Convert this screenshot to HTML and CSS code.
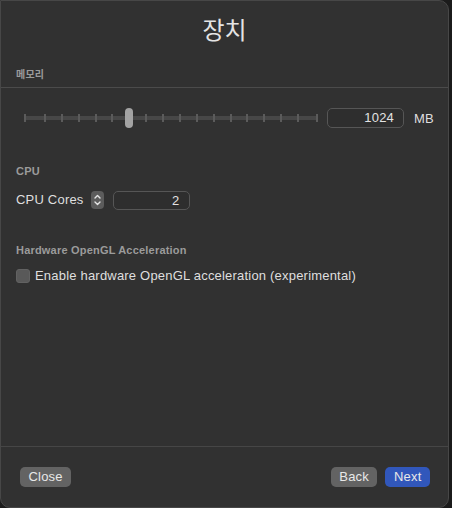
FILE: index.html
```html
<!DOCTYPE html>
<html lang="ko">
<head>
  <meta charset="UTF-8" />
  <meta name="viewport" content="width=device-width, initial-scale=1" />
  <title>장치</title>
  <link rel="stylesheet" href="styles.css">
</head>
<body>
  <div class="window">
    <h1 class="title">장치</h1>

    <div class="group-label with-rule">메모리</div>
    <div class="memory-row">
      <div class="slider">
        <div class="ticks">
          <span class="tick first"></span>
          <span class="tick"></span><span class="tick"></span><span class="tick"></span>
          <span class="tick"></span><span class="tick"></span><span class="tick"></span>
          <span class="tick"></span><span class="tick"></span><span class="tick"></span>
          <span class="tick"></span><span class="tick"></span><span class="tick"></span>
          <span class="tick"></span><span class="tick"></span><span class="tick"></span>
          <span class="tick"></span>
          <span class="tick last"></span>
        </div>
        <div class="thumb"></div>
      </div>
      <div class="field">1024</div>
      <span class="unit">MB</span>
    </div>

    <div class="group-label cpu-label">CPU</div>
    <div class="cpu-row">
      <span class="text">CPU Cores</span>
      <div class="stepper">
        <svg width="13" height="18" viewBox="0 0 13 18">
          <path d="M4 7 L6.5 4.5 L9 7" fill="none" stroke="#e6e6e6" stroke-width="1.4" stroke-linecap="round" stroke-linejoin="round"/>
          <path d="M4 11 L6.5 13.5 L9 11" fill="none" stroke="#e6e6e6" stroke-width="1.4" stroke-linecap="round" stroke-linejoin="round"/>
        </svg>
      </div>
      <div class="field">2</div>
    </div>

    <div class="group-label gl-label">Hardware OpenGL Acceleration</div>
    <label class="check-row">
      <span class="checkbox"></span>
      <span class="text">Enable hardware OpenGL acceleration (experimental)</span>
    </label>

    <div class="spacer"></div>

    <div class="footer">
      <button class="btn">Close</button>
      <div class="footer-right">
        <button class="btn">Back</button>
        <button class="btn primary">Next</button>
      </div>
    </div>
  </div>
</body>
</html>
```

FILE: styles.css
```css
body {
  margin: 0;
  background: #1b1b1b;
  font-family: "Liberation Sans", "Noto Sans CJK KR", sans-serif;
  color: #dfdfdf;
}

.window {
  width: 449px;
  height: 508px;
  box-sizing: border-box;
  background: #313131;
  border: 1px solid #474747;
  border-radius: 0 10px 10px 10px;
  display: flex;
  flex-direction: column;
  overflow: hidden;
}

.title {
  margin: 0;
  padding-top: 12px;
  font-family: "Noto Sans CJK KR", sans-serif;
  font-size: 24px;
  line-height: 32px;
  font-weight: 400;
  text-align: center;
  color: #e4e4e4;
}

.group-label {
  padding-left: 15px;
  font-size: 11px;
  line-height: 14px;
  font-weight: bold;
  letter-spacing: 0.2px;
  color: #9b9b9b;
}

.with-rule {
  margin-top: 22px;
  padding-bottom: 6px;
  border-bottom: 1px solid #4b4b4b;
  font-family: "Noto Sans CJK KR", sans-serif;
  font-size: 10px;
}

.memory-row {
  display: flex;
  align-items: center;
  height: 20px;
  margin-top: 20px;
  padding-left: 23px;
}

.slider {
  position: relative;
  width: 294px;
  height: 20px;
  display: flex;
  align-items: center;
}

.ticks {
  flex: 1;
  height: 4px;
  background: #474747;
  display: flex;
  justify-content: space-between;
  align-items: center;
}

.tick {
  width: 2px;
  height: 8px;
  background: #5b5b5b;
}

.tick.first {
  margin-right: 3px;
}

.tick.last {
  margin-left: 2px;
}

.thumb {
  position: absolute;
  left: 101px;
  top: 0;
  width: 8px;
  height: 20px;
  border-radius: 4px;
  background: #a3a3a3;
}

.field {
  width: 77px;
  height: 20px;
  box-sizing: border-box;
  border: 1px solid #565656;
  border-radius: 5px;
  background: #2e2e2e;
  padding-right: 9px;
  text-align: right;
  font-size: 13px;
  line-height: 18px;
  letter-spacing: 0.2px;
  color: #e2e2e2;
}

.memory-row .field {
  margin-left: 9px;
}

.unit {
  margin-left: 10px;
  font-size: 13px;
  letter-spacing: 0.2px;
}

.cpu-label {
  margin-top: 36px;
}

.cpu-row {
  display: flex;
  align-items: center;
  height: 20px;
  margin-top: 12px;
  padding-left: 15px;
}

.text {
  font-size: 13px;
  line-height: 16px;
  letter-spacing: 0.2px;
}

.stepper {
  width: 13px;
  height: 18px;
  margin-left: 7px;
  border-radius: 4px;
  background: #5c5c5c;
  display: flex;
}

.cpu-row .field {
  margin-left: 9px;
  height: 19px;
}

.gl-label {
  margin-top: 33px;
}

.check-row {
  display: flex;
  align-items: center;
  gap: 5px;
  height: 16px;
  margin-top: 11px;
  padding-left: 15px;
}

.checkbox {
  width: 14px;
  height: 14px;
  box-sizing: border-box;
  border-radius: 3px;
  background: #595959;
  border: 1px solid #626262;
}

.spacer {
  flex: 1;
}

.footer {
  height: 61px;
  box-sizing: border-box;
  border-top: 1px solid #464646;
  padding: 20px 18px 0 19px;
  display: flex;
  justify-content: space-between;
  align-items: flex-start;
}

.footer-right {
  display: flex;
  gap: 8px;
}

.btn {
  height: 20px;
  padding: 0 8.5px;
  border: none;
  border-radius: 5px;
  background: #636363;
  color: #e8e8e8;
  font-family: "Liberation Sans", sans-serif;
  font-size: 13px;
  line-height: 20px;
  letter-spacing: 0.2px;
  cursor: pointer;
}

.btn.primary {
  background: #3157bb;
}
```
